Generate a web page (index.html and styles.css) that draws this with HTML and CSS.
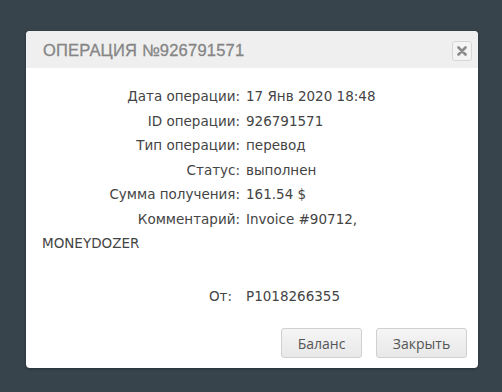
FILE: index.html
```html
<!DOCTYPE html>
<html lang="ru">
<head>
    <meta charset="UTF-8">
    <title>Операция №926791571</title>
    <link rel="stylesheet" href="styles.css">
</head>
<body>
    <div class="modal">
        <div class="modal-header">
            <h3 class="modal-title">Операция №926791571</h3>
            <button class="close-btn" title="Закрыть">
                <svg width="10" height="10" viewBox="0 0 10 10"><path d="M1.5 1.5 L8.5 8.5 M8.5 1.5 L1.5 8.5" stroke="#8a8a8a" stroke-width="2.6" stroke-linecap="round"/></svg>
            </button>
        </div>

        <div class="modal-body">
            <div class="details">
                <div class="label">Дата операции:</div>
                <div class="value">17 Янв 2020 18:48</div>
                <div class="label">ID операции:</div>
                <div class="value">926791571</div>
                <div class="label">Тип операции:</div>
                <div class="value">перевод</div>
                <div class="label">Статус:</div>
                <div class="value">выполнен</div>
                <div class="label">Сумма получения:</div>
                <div class="value">161.54 $</div>
                <div class="label">Комментарий:</div>
                <div class="value">Invoice #90712,</div>
            </div>
            <div class="overflow">MONEYDOZER</div>
            <div class="details details-from">
                <div class="label">От:</div>
                <div class="value">P1018266355</div>
            </div>
        </div>

        <div class="modal-footer">
            <button class="btn">Баланс</button>
            <button class="btn">Закрыть</button>
        </div>
    </div>
</body>
</html>
```

FILE: styles.css
```css
* {
    margin: 0;
    padding: 0;
    box-sizing: border-box;
}

body {
    background: #37444c;
    padding: 31px 24px 0 26px;
    font-family: "DejaVu Sans", "Noto Sans", sans-serif;
    height: 392px;
    overflow: hidden;
}

.modal {
    width: 452px;
    background: #fff;
    border-radius: 4px;
    overflow: hidden;
    box-shadow: 0 1px 3px rgba(0, 0, 0, 0.3);
}

.modal-header {
    height: 37px;
    background: #efefef;
    display: flex;
    align-items: center;
    justify-content: space-between;
    padding: 0 6px 0 17px;
}

.modal-title {
    font-family: "Liberation Sans", Arial, sans-serif;
    font-size: 16.5px;
    font-weight: normal;
    color: #858585;
    letter-spacing: 0.2px;
    text-transform: uppercase;
    padding-top: 1px;
    -webkit-text-stroke: 0.3px #858585;
}

.close-btn {
    width: 20px;
    height: 20px;
    border: 1px solid #d6d6d6;
    border-radius: 3px;
    background: #f4f4f4;
    display: flex;
    align-items: center;
    justify-content: center;
    margin-top: 3px;
}

.modal-body {
    padding: 16px 16px 0 16px;
    color: #444;
    font-size: 13.5px;
    line-height: 24.5px;
}

.details {
    display: grid;
    grid-template-columns: 198px auto;
    column-gap: 6px;
}

.label {
    text-align: right;
}

.details-from {
    grid-template-columns: 190px auto;
    column-gap: 14px;
    margin-top: 28px;
}

.modal-footer {
    display: flex;
    justify-content: flex-end;
    gap: 14px;
    padding: 20px 11px 10px 0;
}

.btn {
    height: 30px;
    padding: 0 14px;
    min-width: 81px;
    font-family: "Open Sans", sans-serif;
    font-size: 14px;
    color: #555;
    background: linear-gradient(#f5f5f5, #e8e8e8);
    border: 1px solid #d0d0d0;
    border-radius: 3px;
}

.btn + .btn {
    min-width: 91px;
}
```
